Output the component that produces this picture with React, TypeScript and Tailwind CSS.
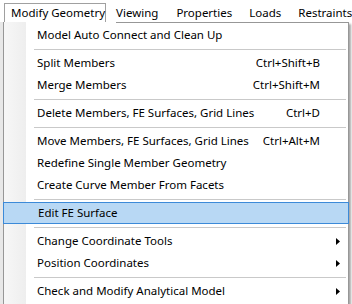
const font = { fontFamily: '"Noto Sans", "Open Sans", sans-serif' }

type Item = { label: string; shortcut?: string; sub?: boolean; active?: boolean } | "sep"

const items: Item[] = [
  { label: "Model Auto Connect and Clean Up" },
  "sep",
  { label: "Split Members", shortcut: "Ctrl+Shift+B" },
  { label: "Merge Members", shortcut: "Ctrl+Shift+M" },
  "sep",
  { label: "Delete Members, FE Surfaces, Grid Lines", shortcut: "Ctrl+D" },
  "sep",
  { label: "Move Members, FE Surfaces, Grid Lines", shortcut: "Ctrl+Alt+M" },
  { label: "Redefine Single Member Geometry" },
  { label: "Create Curve Member From Facets" },
  "sep",
  { label: "Edit FE Surface", active: true },
  "sep",
  { label: "Change Coordinate Tools", sub: true },
  { label: "Position Coordinates", sub: true },
  "sep",
  { label: "Check and Modify Analytical Model", sub: true },
]

function Arrow() {
  return (
    <svg width="4" height="7" viewBox="0 0 4 7" className="block">
      <path d="M0 0 L4 3.5 L0 7 Z" fill="#000" />
    </svg>
  )
}

export default function App() {
  return (
    <div className="relative h-[304px] w-[352px] overflow-hidden bg-white text-[11.5px] text-black" style={font}>
      {/* menu bar */}
      <div className="flex h-[22px] items-end bg-white whitespace-nowrap">
        <div className="ml-[4px] flex h-[19px] w-[108px] items-center border border-b-0 border-[#a0a0a0] bg-white pl-[6px] leading-none">
          Modify Geometry
        </div>
        <div className="ml-[10px] flex h-[19px] items-center leading-none">Viewing</div>
        <div className="ml-[18px] flex h-[19px] items-center leading-none">Properties</div>
        <div className="ml-[17px] flex h-[19px] items-center leading-none">Loads</div>
        <div className="ml-[17px] flex h-[19px] items-center leading-none">Restraints</div>
      </div>

      {/* dropdown */}
      <div className="flex">
        <div className="w-[3px] bg-[#e8e8e8]" />
        <div className="relative w-[346px] border border-t-0 border-[#979797] bg-white shadow-[2px_2px_2px_rgba(0,0,0,0.35)]">
          <div className="absolute left-[112px] right-0 top-0 h-px bg-[#979797]" />
          <div className="absolute bottom-0 left-0 top-0 w-[22px] bg-gradient-to-r from-[#f7f7f7] to-[#eeeeee]" />
          <div className="relative flex flex-col pt-[2px] pb-[2px]">
            {items.map((it, i) =>
              it === "sep" ? (
                <div key={i} className="flex h-[6px] items-center pl-[30px] pr-[2px]">
                  <div className="h-px w-full bg-[#c9c9c9]" />
                </div>
              ) : (
                <div
                  key={i}
                  className={`flex h-[22px] items-center pl-[33px] pr-[9px] ${
                    it.active ? "mx-[-1px] border border-[#3c8ad8] bg-[#b8d8f4] pl-[34px] pr-[10px]" : ""
                  }`}
                >
                  <span className="flex-1 whitespace-nowrap">{it.label}</span>
                  {it.shortcut && <span className="mr-[19px] whitespace-nowrap">{it.shortcut}</span>}
                  {it.sub && (
                    <span className="mr-[-1px]">
                      <Arrow />
                    </span>
                  )}
                </div>
              )
            )}
          </div>
        </div>
      </div>
    </div>
  )
}
